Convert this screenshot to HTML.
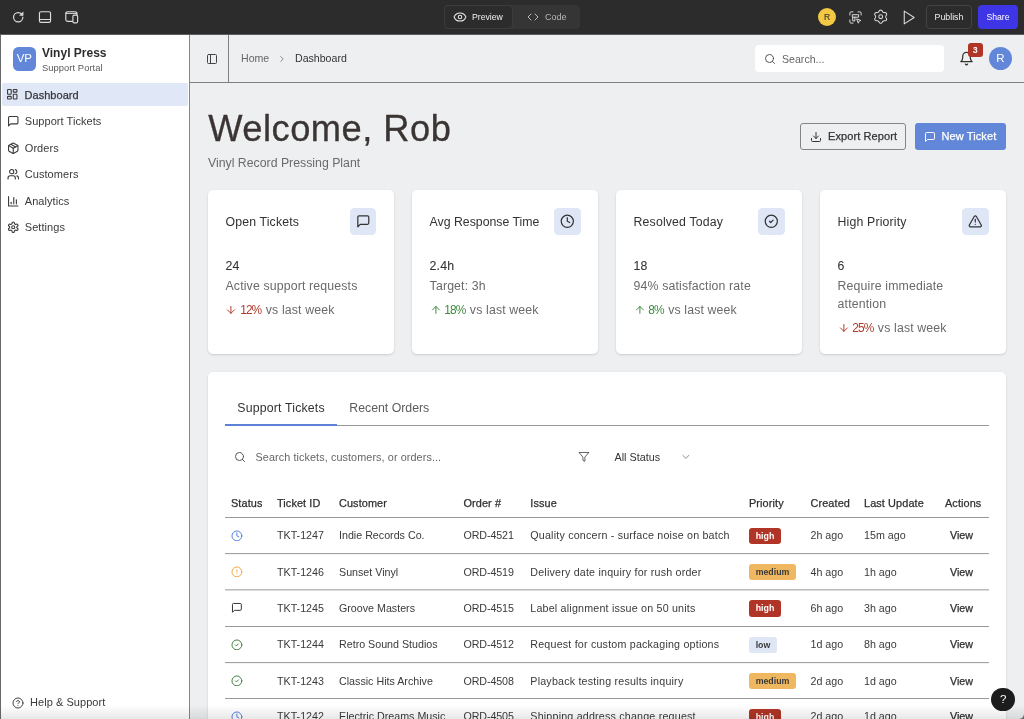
<!DOCTYPE html>
<html lang="en">
<head>
<meta charset="utf-8">
<title>Vinyl Press Support Portal</title>
<style>
*{box-sizing:border-box;margin:0;padding:0}
html,body{width:1024px;height:719px;overflow:hidden;background:#eeeff1}
body{font-family:"Liberation Sans",sans-serif;color:#333;position:relative;font-size:10.35px}
svg{display:block;fill:none;stroke:currentColor;stroke-width:2;stroke-linecap:round;stroke-linejoin:round}
#wrap{position:absolute;left:0;top:0;width:1024px;height:719px;overflow:hidden;will-change:transform}
.abs{position:absolute}
.t{position:absolute;white-space:nowrap;line-height:1}

/* ---------- top tool bar ---------- */
#topbar{position:absolute;left:0;top:0;width:1024px;height:35px;background:#2c2c2c;color:#e6e6e6;border-bottom:1px solid #5d5d5d}
#topbar .ic{position:absolute;color:#dcdcdc}
#seg{position:absolute;left:444px;top:5px;width:136px;height:24px;border-radius:4px;background:#353535}
#seg .on{position:absolute;left:0;top:0;width:68.5px;height:24px;border-radius:4px;background:#2c2c2c;border:1px solid #3c3c3c}
#avatarY{position:absolute;left:818px;top:8px;width:18px;height:18px;border-radius:50%;background:#f3c845;color:#4a4028;font-size:8.5px;-webkit-text-stroke:.2px #4a4028;text-align:center;line-height:18px}
#publish{position:absolute;left:926px;top:5px;width:46px;height:24px;border-radius:4px;border:1px solid #444;color:#f0f0f0;font-size:8.8px;text-align:center;line-height:22px}
#share{position:absolute;left:978px;top:5px;width:40px;height:24px;border-radius:4px;background:#3e36e6;color:#fff;font-size:8.7px;text-align:center;line-height:24px}

/* ---------- sidebar ---------- */
#sidebar{position:absolute;left:0;top:35px;width:190px;height:684px;background:#fff;border-right:1px solid #868686;border-left:1px solid #6a6a6a}
#logo{position:absolute;left:12.6px;top:47.1px;width:23.5px;height:23.6px;border-radius:5.5px;background:#6287d9;color:#fff;font-size:11.5px;text-align:center;line-height:23.6px}
.nav{position:absolute;left:1px;width:188px;height:24px;color:#3a3a3a}
.nav.active{background:#e0e7f7;border-radius:2px;left:1.9px;width:186.3px;top:82.9px;height:23.4px}
.nav svg{position:absolute;left:5.7px;top:5.6px;width:12.5px;height:12.5px;stroke-width:2.1}
.nav.active svg{left:4.3px;top:5px}
.nav.active span{left:22.6px;top:-.4px}
.nav span{position:absolute;left:23.8px;top:-.5px;line-height:24px;font-size:11px;letter-spacing:.05px;white-space:nowrap}

/* ---------- header ---------- */
#header{position:absolute;left:190px;top:35px;width:834px;height:48px;border-bottom:1px solid #808080}
#hdiv{position:absolute;left:228px;top:35px;width:1px;height:47px;background:#808080}
#search{position:absolute;left:755px;top:45px;width:189px;height:27px;border-radius:4px;background:#fff}
#avatarB{position:absolute;left:988.8px;top:47.1px;width:23.4px;height:23.4px;border-radius:50%;background:#6287d9;color:#fff;font-size:11.5px;text-align:center;line-height:23.4px}
#badge{position:absolute;left:968px;top:42.6px;width:14.5px;height:14.4px;border-radius:3px;background:#b03526;color:#fff;font-size:8.8px;font-weight:bold;text-align:center;line-height:14.4px}

/* ---------- content ---------- */
.btn{position:absolute;top:123px;height:27px;border-radius:3px;font-size:11px;letter-spacing:.1px;line-height:27px;white-space:nowrap}
.card{position:absolute;top:190px;width:186.5px;height:163.7px;background:#fff;border-radius:5px;box-shadow:0 1px 3px rgba(0,0,0,.10),0 1px 2px rgba(0,0,0,.06)}
.card .ttl{position:absolute;left:18px;top:215px;font-size:11.9px;color:#333}
.ibox{position:absolute;left:141.9px;top:18px;width:26.9px;height:26.8px;border-radius:4.5px;background:#dfe6f6;color:#333}
.ibox svg{position:absolute;left:6px;top:6px;width:14.6px;height:14.6px;stroke-width:2}
.c{position:absolute;left:17.8px;white-space:nowrap;font-size:12.3px;letter-spacing:.15px;line-height:1}
.gray{color:#6a6a6a}
.arr{position:absolute;left:0;top:.2px;width:11.8px;height:11.8px}
.tr{margin-left:14.7px;letter-spacing:-.9px;margin-right:.9px;font-size:11.9px}
.red{color:#b23a2c}
.green{color:#3f8a3f}
#tcard{position:absolute;left:207.7px;top:371.7px;width:798.5px;height:360px;background:#fff;border-radius:5px;box-shadow:0 1px 3px rgba(0,0,0,.10),0 1px 2px rgba(0,0,0,.06)}
.hl{position:absolute;left:225px;width:763.5px;height:1px;background:#979797}
.th{position:absolute;top:498.2px;font-size:10.9px;letter-spacing:.1px;color:#2f2f2f;white-space:nowrap;line-height:1;-webkit-text-stroke:.25px #2f2f2f}
.td{position:absolute;font-size:10.7px;color:#3a3a3a;white-space:nowrap;line-height:1}
.bdg{position:absolute;left:749px;height:16.5px;border-radius:3px;font-size:8.8px;line-height:16.5px;text-align:center;font-weight:bold}
.bdg.high{background:#b03526;color:#fff;width:32px}
.bdg.medium{background:#efb75f;color:#3a3a3a;width:47px}
.bdg.low{background:#dfe7f7;color:#3a3a3a;width:28px}
.st{position:absolute;left:231.2px;width:11.8px;height:11.8px}
</style>
</head>
<body>
<div id="wrap">

<!-- ================= TOP BAR ================= -->
<div id="topbar">
  <svg class="ic" style="stroke-width:2.3;left:12px;top:11px;width:12.4px;height:12.4px" viewBox="0 0 24 24"><path d="M21 12a9 9 0 1 1-9-9c2.52 0 4.93 1 6.74 2.74L20 7"/><path d="M21.5 2.5v6h-6z" fill="currentColor" style="stroke-width:1.2"/></svg>
  <svg class="ic" style="stroke-width:1.15;left:37px;top:9px;width:16px;height:16px" viewBox="0 0 16 16"><rect x="2.45" y="2.75" width="11.1" height="10.6" rx="1.6"/><path d="M2.45 10.5h11.1"/></svg>
  <svg class="ic" style="stroke-width:1.15;left:64px;top:9px;width:16px;height:16px" viewBox="0 0 16 16"><path d="M8.6 12.4H3.6a1.8 1.8 0 0 1-1.8-1.8V4.5a1.8 1.8 0 0 1 1.8-1.8h7.5a1.8 1.8 0 0 1 1.8 1.8V6"/><path d="M1.8 4.4h11.1" style="stroke-width:1"/><rect x="8.9" y="6.1" width="4.7" height="7.8" rx="1.2" fill="#2c2c2c"/></svg>
  <div id="seg"><div class="on"></div>
    <svg class="ic" style="stroke-width:1.8;left:9px;top:5px;width:14px;height:14px;color:#e8e8e8" viewBox="0 0 24 24"><path d="M2.062 12.348a1 1 0 0 1 0-.696 10.75 10.75 0 0 1 19.876 0 1 1 0 0 1 0 .696 10.75 10.75 0 0 1-19.876 0"/><circle cx="12" cy="12" r="3"/></svg>
    <span class="t" style="left:28px;top:7.5px;font-size:8.7px;color:#f0f0f0">Preview</span>
    <svg class="ic" style="left:83px;top:6px;width:12px;height:12px;color:#b8b8b8" viewBox="0 0 24 24"><polyline points="16 18 22 12 16 6"/><polyline points="8 6 2 12 8 18"/></svg>
    <span class="t" style="left:101px;top:7.5px;font-size:9px;color:#b8b8b8">Code</span>
  </div>
  <div id="avatarY">R</div>
  <svg class="ic" style="stroke-width:1.6;left:847.5px;top:9.5px;width:15px;height:15px" viewBox="0 0 24 24"><path d="M3 8V5a2 2 0 0 1 2-2h3"/><path d="M16 3h3a2 2 0 0 1 2 2v3"/><path d="M3 16v3a2 2 0 0 0 2 2h3"/><path d="M7.5 7.5h9.5v4h-9.5z"/><path d="M7.5 11.5v6h3.5v-6"/><path d="m14.5 14.5 6 2.2-2.7 1.1-1.1 2.7z"/></svg>
  <svg class="ic" style="stroke-width:1.6;left:873.3px;top:9.3px;width:15.4px;height:15.4px" viewBox="0 0 24 24"><path d="M12.00 1.75 L12.67 1.80 L13.32 1.97 L13.91 2.41 L14.36 3.21 L14.71 4.03 L15.09 4.53 L15.53 4.85 L15.97 5.12 L16.43 5.37 L16.92 5.58 L17.55 5.67 L18.43 5.57 L19.35 5.55 L20.02 5.84 L20.50 6.32 L20.88 6.87 L21.17 7.48 L21.34 8.13 L21.26 8.86 L20.79 9.64 L20.26 10.36 L20.02 10.94 L19.96 11.48 L19.95 12.00 L19.96 12.52 L20.02 13.06 L20.26 13.64 L20.79 14.36 L21.26 15.14 L21.34 15.87 L21.17 16.52 L20.88 17.12 L20.50 17.68 L20.02 18.16 L19.35 18.45 L18.43 18.43 L17.55 18.33 L16.92 18.42 L16.43 18.63 L15.97 18.88 L15.53 19.15 L15.09 19.47 L14.71 19.97 L14.36 20.79 L13.91 21.59 L13.32 22.03 L12.67 22.20 L12.00 22.25 L11.33 22.20 L10.68 22.03 L10.09 21.59 L9.64 20.79 L9.29 19.97 L8.91 19.47 L8.47 19.15 L8.03 18.88 L7.57 18.63 L7.08 18.42 L6.45 18.33 L5.57 18.43 L4.65 18.45 L3.98 18.16 L3.50 17.68 L3.12 17.13 L2.83 16.52 L2.66 15.87 L2.74 15.14 L3.21 14.36 L3.74 13.64 L3.98 13.06 L4.04 12.52 L4.05 12.00 L4.04 11.48 L3.98 10.94 L3.74 10.36 L3.21 9.64 L2.74 8.86 L2.66 8.13 L2.83 7.48 L3.12 6.87 L3.50 6.32 L3.98 5.84 L4.65 5.55 L5.57 5.57 L6.45 5.67 L7.08 5.58 L7.57 5.37 L8.02 5.12 L8.47 4.85 L8.91 4.53 L9.29 4.03 L9.64 3.21 L10.09 2.41 L10.68 1.97 L11.33 1.80Z"/><circle cx="12" cy="12" r="3"/></svg>
  <svg class="ic" style="stroke-width:1.5;left:900px;top:8.5px;width:17px;height:17px" viewBox="0 0 24 24"><polygon points="6 3 20 12 6 21 6 3"/></svg>
  <div id="publish">Publish</div>
  <div id="share">Share</div>
</div>

<!-- ================= SIDEBAR ================= -->
<div id="sidebar"></div>
<div id="logo">VP</div>
<span class="t" style="left:42px;top:46.5px;font-size:12px;font-weight:bold;color:#2e2e2e">Vinyl Press</span>
<span class="t" style="left:42px;top:63px;font-size:9.4px;letter-spacing:.05px;color:#5a5a5a">Support Portal</span>

<div class="nav active" style="top:83px"><svg viewBox="0 0 24 24"><rect width="7" height="9" x="3" y="3" rx="1"/><rect width="7" height="5" x="14" y="3" rx="1"/><rect width="7" height="9" x="14" y="12" rx="1"/><rect width="7" height="5" x="3" y="16" rx="1"/></svg><span style="-webkit-text-stroke:.25px #333">Dashboard</span></div>
<div class="nav" style="top:109.5px"><svg viewBox="0 0 24 24"><path d="M21 15a2 2 0 0 1-2 2H7l-4 4V5a2 2 0 0 1 2-2h14a2 2 0 0 1 2 2z"/></svg><span>Support Tickets</span></div>
<div class="nav" style="top:136px"><svg viewBox="0 0 24 24"><path d="m7.5 4.27 9 5.15"/><path d="M21 8a2 2 0 0 0-1-1.73l-7-4a2 2 0 0 0-2 0l-7 4A2 2 0 0 0 3 8v8a2 2 0 0 0 1 1.73l7 4a2 2 0 0 0 2 0l7-4A2 2 0 0 0 21 16Z"/><path d="m3.3 7 8.7 5 8.7-5"/><path d="M12 22V12"/></svg><span>Orders</span></div>
<div class="nav" style="top:162.5px"><svg viewBox="0 0 24 24"><path d="M16 21v-2a4 4 0 0 0-4-4H6a4 4 0 0 0-4 4v2"/><circle cx="9" cy="7" r="4"/><path d="M22 21v-2a4 4 0 0 0-3-3.87"/><path d="M16 3.13a4 4 0 0 1 0 7.75"/></svg><span>Customers</span></div>
<div class="nav" style="top:189px"><svg viewBox="0 0 24 24"><path d="M3 3v18h18"/><path d="M18 17V9"/><path d="M13 17V5"/><path d="M8 17v-3"/></svg><span>Analytics</span></div>
<div class="nav" style="top:215.5px"><svg viewBox="0 0 24 24"><path d="M12.22 2h-.44a2 2 0 0 0-2 2v.18a2 2 0 0 1-1 1.73l-.43.25a2 2 0 0 1-2 0l-.15-.08a2 2 0 0 0-2.73.73l-.22.38a2 2 0 0 0 .73 2.73l.15.1a2 2 0 0 1 1 1.72v.51a2 2 0 0 1-1 1.74l-.15.09a2 2 0 0 0-.73 2.73l.22.38a2 2 0 0 0 2.73.73l.15-.08a2 2 0 0 1 2 0l.43.25a2 2 0 0 1 1 1.73V20a2 2 0 0 0 2 2h.44a2 2 0 0 0 2-2v-.18a2 2 0 0 1 1-1.73l.43-.25a2 2 0 0 1 2 0l.15.08a2 2 0 0 0 2.73-.73l.22-.39a2 2 0 0 0-.73-2.73l-.15-.08a2 2 0 0 1-1-1.74v-.5a2 2 0 0 1 1-1.74l.15-.09a2 2 0 0 0 .73-2.73l-.22-.38a2 2 0 0 0-2.73-.73l-.15.08a2 2 0 0 1-2 0l-.43-.25a2 2 0 0 1-1-1.73V4a2 2 0 0 0-2-2z"/><circle cx="12" cy="12" r="3"/></svg><span>Settings</span></div>

<svg class="abs" style="left:12.3px;top:696.7px;width:12px;height:12px;color:#444" viewBox="0 0 24 24"><circle cx="12" cy="12" r="10"/><path d="M9.09 9a3 3 0 0 1 5.83 1c0 2-3 3-3 3"/><path d="M12 17h.01"/></svg>
<span class="t" style="left:30px;top:697.3px;font-size:11px;letter-spacing:.05px;color:#3a3a3a">Help &amp; Support</span>

<!-- ================= HEADER ================= -->
<div id="header"></div>
<div id="hdiv"></div>
<svg class="abs" style="left:206px;top:52.5px;width:12px;height:12px;color:#444" viewBox="0 0 24 24"><rect width="18" height="18" x="3" y="3" rx="2"/><path d="M9 3v18"/></svg>
<span class="t" style="left:241px;top:53.1px;font-size:10.6px;color:#666">Home</span>
<svg class="abs" style="left:277px;top:54px;width:10px;height:10px;color:#777" viewBox="0 0 24 24"><path d="m9 18 6-6-6-6"/></svg>
<span class="t" style="left:295px;top:53.1px;font-size:10.6px;color:#333">Dashboard</span>
<div id="search"></div>
<svg class="abs" style="left:764px;top:53px;width:12px;height:12px;color:#555" viewBox="0 0 24 24"><circle cx="11" cy="11" r="8"/><path d="m21 21-4.3-4.3"/></svg>
<span class="t" style="left:782px;top:53.5px;font-size:10.6px;color:#666">Search...</span>
<svg class="abs" style="left:959px;top:51px;width:15px;height:15px;color:#333" viewBox="0 0 24 24"><path d="M6 8a6 6 0 0 1 12 0c0 7 3 9 3 9H3s3-2 3-9"/><path d="M10.3 21a1.94 1.94 0 0 0 3.4 0"/></svg>
<div id="badge">3</div>
<div id="avatarB">R</div>

<!-- ================= CONTENT ================= -->
<span class="t" style="left:208.3px;top:110.9px;font-size:36.3px;color:#3a3533;letter-spacing:.47px;-webkit-text-stroke:.3px #3a3533">Welcome, Rob</span>
<span class="t" style="left:208px;top:157.4px;font-size:12.3px;color:#6a6a6a">Vinyl Record Pressing Plant</span>

<div class="btn" style="left:800px;width:106px;border:1px solid #858585;color:#333"><svg class="abs" style="left:9px;top:7px;width:12px;height:12px" viewBox="0 0 24 24"><path d="M21 15v4a2 2 0 0 1-2 2H5a2 2 0 0 1-2-2v-4"/><polyline points="7 10 12 15 17 10"/><line x1="12" x2="12" y1="15" y2="3"/></svg><span class="abs" style="left:27px;top:-.9px;-webkit-text-stroke:.25px #333">Export Report</span></div>
<div class="btn" style="left:915px;width:91px;background:#6287d9;color:#fff"><svg class="abs" style="left:9px;top:8px;width:12px;height:12px" viewBox="0 0 24 24"><path d="M21 15a2 2 0 0 1-2 2H7l-4 4V5a2 2 0 0 1 2-2h14a2 2 0 0 1 2 2z"/></svg><span class="abs" style="left:26.5px;top:.1px;-webkit-text-stroke:.25px #fff">New Ticket</span></div>

<!-- stat cards -->
<div class="card" style="left:207.7px">
  <span class="c" style="top:25.5px">Open Tickets</span>
  <div class="ibox"><svg viewBox="0 0 24 24"><path d="M21 15a2 2 0 0 1-2 2H7l-4 4V5a2 2 0 0 1 2-2h14a2 2 0 0 1 2 2z"/></svg></div>
  <span class="c" style="top:70px;-webkit-text-stroke:.08px #333">24</span>
  <span class="c gray" style="top:90.4px">Active support requests</span>
  <span class="c gray" style="top:114px"><svg class="arr red" viewBox="0 0 24 24"><path d="M12 5v14"/><path d="m19 12-7 7-7-7"/></svg><span class="red tr">12%</span> vs last week</span>
</div>
<div class="card" style="left:411.8px">
  <span class="c" style="top:25.5px;letter-spacing:0">Avg Response Time</span>
  <div class="ibox"><svg viewBox="0 0 24 24"><circle cx="12" cy="12" r="10"/><polyline points="12 6 12 12 16 14"/></svg></div>
  <span class="c" style="top:70px;-webkit-text-stroke:.08px #333">2.4h</span>
  <span class="c gray" style="top:90.4px">Target: 3h</span>
  <span class="c gray" style="top:114px"><svg class="arr green" viewBox="0 0 24 24"><path d="m5 12 7-7 7 7"/><path d="M12 19V5"/></svg><span class="green tr">18%</span> vs last week</span>
</div>
<div class="card" style="left:615.8px">
  <span class="c" style="top:25.5px">Resolved Today</span>
  <div class="ibox"><svg viewBox="0 0 24 24"><circle cx="12" cy="12" r="10"/><path d="m9 12 2 2 4-4"/></svg></div>
  <span class="c" style="top:70px;-webkit-text-stroke:.08px #333">18</span>
  <span class="c gray" style="top:90.4px">94% satisfaction rate</span>
  <span class="c gray" style="top:114px"><svg class="arr green" viewBox="0 0 24 24"><path d="m5 12 7-7 7 7"/><path d="M12 19V5"/></svg><span class="green tr">8%</span> vs last week</span>
</div>
<div class="card" style="left:819.8px">
  <span class="c" style="top:25.5px">High Priority</span>
  <div class="ibox"><svg viewBox="0 0 24 24"><path d="m21.73 18-8-14a2 2 0 0 0-3.48 0l-8 14A2 2 0 0 0 4 21h16a2 2 0 0 0 1.73-3Z"/><path d="M12 9v4"/><path d="M12 17h.01"/></svg></div>
  <span class="c" style="top:70px;-webkit-text-stroke:.08px #333">6</span>
  <span class="c gray" style="top:90.4px">Require immediate</span>
  <span class="c gray" style="top:108.2px">attention</span>
  <span class="c gray" style="top:131.7px"><svg class="arr red" viewBox="0 0 24 24"><path d="M12 5v14"/><path d="m19 12-7 7-7-7"/></svg><span class="red tr">25%</span> vs last week</span>
</div>

<!-- tickets card -->
<div id="tcard"></div>
<span class="t" style="left:237.3px;top:401.6px;font-size:12.3px;letter-spacing:.18px;color:#333">Support Tickets</span>
<span class="t" style="left:349.3px;top:401.6px;font-size:12.3px;color:#5c5c5c">Recent Orders</span>
<div class="hl" style="top:424.6px"></div>
<div class="abs" style="left:225px;top:423.6px;width:112.3px;height:2px;background:#5b82d6"></div>

<svg class="abs" style="left:234px;top:451px;width:12px;height:12px;color:#555" viewBox="0 0 24 24"><circle cx="11" cy="11" r="8"/><path d="m21 21-4.3-4.3"/></svg>
<span class="t" style="left:255.5px;top:451.8px;font-size:10.8px;letter-spacing:.1px;color:#666">Search tickets, customers, or orders...</span>
<svg class="abs" style="stroke-width:1.7;left:577.7px;top:451.1px;width:11.8px;height:11.8px;color:#444" viewBox="0 0 24 24"><polygon points="22 3 2 3 10 12.46 10 19 14 21 14 12.46 22 3"/></svg>
<span class="t" style="left:614.5px;top:452.2px;font-size:10.8px;color:#333">All Status</span>
<svg class="abs" style="left:679.6px;top:451.3px;width:11.8px;height:11.8px;color:#888" viewBox="0 0 24 24"><path d="m6 9 6 6 6-6"/></svg>

<span class="th" style="left:231px">Status</span>
<span class="th" style="left:277px">Ticket ID</span>
<span class="th" style="left:339px">Customer</span>
<span class="th" style="left:463.5px">Order #</span>
<span class="th" style="left:530.3px">Issue</span>
<span class="th" style="left:749px">Priority</span>
<span class="th" style="left:810.5px">Created</span>
<span class="th" style="left:864px">Last Update</span>
<span class="th" style="left:945px">Actions</span>
<div class="hl" style="top:517px"></div>

<!-- rows inserted below -->
<div id="rows">
<svg class="st" style="top:529.5px;color:#4f7fe0" viewBox="0 0 24 24"><circle cx="12" cy="12" r="10"/><polyline points="12 6 12 12 16 14"/></svg>
<span class="td" style="left:277px;top:530.4px">TKT-1247</span>
<span class="td" style="left:339px;top:530.4px">Indie Records Co.</span>
<span class="td" style="left:463.5px;top:530.4px;letter-spacing:-.1px">ORD-4521</span>
<span class="td" style="left:530.3px;top:530.4px;letter-spacing:.2px">Quality concern - surface noise on batch</span>
<div class="bdg high" style="top:527.6px">high</div>
<span class="td" style="left:810.5px;top:530.4px">2h ago</span>
<span class="td" style="left:864px;top:530.4px">15m ago</span>
<span class="td" style="left:950px;top:530.4px;color:#2f2f2f;-webkit-text-stroke:.25px #2f2f2f">View</span>
<div class="hl" style="top:0;transform:translateY(553.1px)"></div>
<svg class="st" style="top:565.6px;color:#f0a63c" viewBox="0 0 24 24"><circle cx="12" cy="12" r="10"/><line x1="12" x2="12" y1="8" y2="12"/><line x1="12" x2="12.01" y1="16" y2="16"/></svg>
<span class="td" style="left:277px;top:566.5px">TKT-1246</span>
<span class="td" style="left:339px;top:566.5px">Sunset Vinyl</span>
<span class="td" style="left:463.5px;top:566.5px;letter-spacing:-.1px">ORD-4519</span>
<span class="td" style="left:530.3px;top:566.5px;letter-spacing:.2px">Delivery date inquiry for rush order</span>
<div class="bdg medium" style="top:563.7px">medium</div>
<span class="td" style="left:810.5px;top:566.5px">4h ago</span>
<span class="td" style="left:864px;top:566.5px">1h ago</span>
<span class="td" style="left:950px;top:566.5px;color:#2f2f2f;-webkit-text-stroke:.25px #2f2f2f">View</span>
<div class="hl" style="top:0;transform:translateY(589.35px)"></div>
<svg class="st" style="top:601.9px;color:#333" viewBox="0 0 24 24"><path d="M21 15a2 2 0 0 1-2 2H7l-4 4V5a2 2 0 0 1 2-2h14a2 2 0 0 1 2 2z"/></svg>
<span class="td" style="left:277px;top:602.8px">TKT-1245</span>
<span class="td" style="left:339px;top:602.8px">Groove Masters</span>
<span class="td" style="left:463.5px;top:602.8px;letter-spacing:-.1px">ORD-4515</span>
<span class="td" style="left:530.3px;top:602.8px;letter-spacing:.2px">Label alignment issue on 50 units</span>
<div class="bdg high" style="top:600.0px">high</div>
<span class="td" style="left:810.5px;top:602.8px">6h ago</span>
<span class="td" style="left:864px;top:602.8px">3h ago</span>
<span class="td" style="left:950px;top:602.8px;color:#2f2f2f;-webkit-text-stroke:.25px #2f2f2f">View</span>
<div class="hl" style="top:0;transform:translateY(626.0px)"></div>
<svg class="st" style="top:638.5px;color:#3f803f" viewBox="0 0 24 24"><circle cx="12" cy="12" r="10"/><path d="m9 12 2 2 4-4"/></svg>
<span class="td" style="left:277px;top:639.4px">TKT-1244</span>
<span class="td" style="left:339px;top:639.4px">Retro Sound Studios</span>
<span class="td" style="left:463.5px;top:639.4px;letter-spacing:-.1px">ORD-4512</span>
<span class="td" style="left:530.3px;top:639.4px;letter-spacing:.2px">Request for custom packaging options</span>
<div class="bdg low" style="top:636.6px">low</div>
<span class="td" style="left:810.5px;top:639.4px">1d ago</span>
<span class="td" style="left:864px;top:639.4px">8h ago</span>
<span class="td" style="left:950px;top:639.4px;color:#2f2f2f;-webkit-text-stroke:.25px #2f2f2f">View</span>
<div class="hl" style="top:0;transform:translateY(662.1px)"></div>
<svg class="st" style="top:674.6px;color:#3f803f" viewBox="0 0 24 24"><circle cx="12" cy="12" r="10"/><path d="m9 12 2 2 4-4"/></svg>
<span class="td" style="left:277px;top:675.5px">TKT-1243</span>
<span class="td" style="left:339px;top:675.5px">Classic Hits Archive</span>
<span class="td" style="left:463.5px;top:675.5px;letter-spacing:-.1px">ORD-4508</span>
<span class="td" style="left:530.3px;top:675.5px;letter-spacing:.2px">Playback testing results inquiry</span>
<div class="bdg medium" style="top:672.7px">medium</div>
<span class="td" style="left:810.5px;top:675.5px">2d ago</span>
<span class="td" style="left:864px;top:675.5px">1d ago</span>
<span class="td" style="left:950px;top:675.5px;color:#2f2f2f;-webkit-text-stroke:.25px #2f2f2f">View</span>
<div class="hl" style="top:0;transform:translateY(698.0px)"></div>
<svg class="st" style="top:710.5px;color:#4f7fe0" viewBox="0 0 24 24"><circle cx="12" cy="12" r="10"/><polyline points="12 6 12 12 16 14"/></svg>
<span class="td" style="left:277px;top:711.4px">TKT-1242</span>
<span class="td" style="left:339px;top:711.4px">Electric Dreams Music</span>
<span class="td" style="left:463.5px;top:711.4px;letter-spacing:-.1px">ORD-4505</span>
<span class="td" style="left:530.3px;top:711.4px;letter-spacing:.2px">Shipping address change request</span>
<div class="bdg high" style="top:708.6px">high</div>
<span class="td" style="left:810.5px;top:711.4px">2d ago</span>
<span class="td" style="left:864px;top:711.4px">1d ago</span>
<span class="td" style="left:950px;top:711.4px;color:#2f2f2f;-webkit-text-stroke:.25px #2f2f2f">View</span>
<div class="hl" style="top:0;transform:translateY(734.2px)"></div>
</div>

<!-- help fab -->
<div class="abs" style="left:0;top:705px;width:1024px;height:14px;background:linear-gradient(to bottom,rgba(0,0,0,0),rgba(0,0,0,.09))"></div>
<div class="abs" style="left:991.4px;top:687.8px;width:23.4px;height:23.4px;border-radius:50%;background:#1c1c1c;color:#fff;font-size:11.5px;text-align:center;line-height:23.4px">?</div>
<div class="abs" style="left:1019px;top:714px;width:5px;height:5px;background:radial-gradient(circle at 0 0,rgba(0,0,0,0) 4.4px,#6a6a6a 5.3px)"></div>
</div>
</body>
</html>
